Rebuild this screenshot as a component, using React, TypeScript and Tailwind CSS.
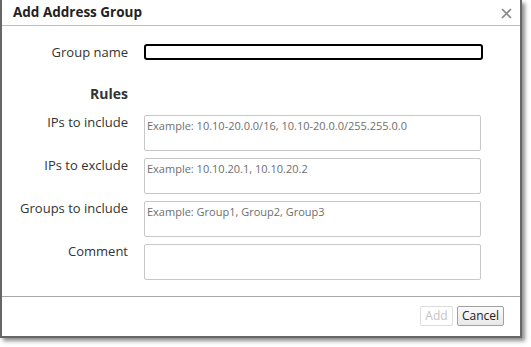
import React from "react";

const font = { fontFamily: '"Open Sans", "Noto Sans", sans-serif' };

function Row({ label, placeholder }: { label: string; placeholder?: string }) {
  return (
    <div className="flex items-start mb-[7px]">
      <div className="w-[126px] text-right text-[13px] leading-[16px] text-[#333] -mt-[1px]">{label}</div>
      <div className="ml-[16px] w-[337px] h-[36px] border border-[#c8c8c8] rounded-[2px] bg-white px-[2px] pt-[3px] text-[11px] leading-[14px] text-[#6e6e6e]">
        {placeholder}
      </div>
    </div>
  );
}

export default function App() {
  return (
    <div className="w-[531px] h-[347px] bg-white relative" style={font}>
      <div className="w-[522px] h-[338px] bg-white border-x-2 border-b-2 border-[#666] shadow-[3px_3px_4px_rgba(0,0,0,0.45)] flex flex-col">
        <div className="h-[26px] border-b border-[#bdbdbd] flex items-center justify-between pl-[11px] pr-[8px]">
          <span className="text-[13.5px] font-bold text-[#222] leading-none">Add Address Group</span>
          <svg width="11" height="11" viewBox="0 0 11 11" className="mt-[1px]">
            <path d="M1 1 L10 10 M10 1 L1 10" stroke="#8a8a8a" strokeWidth="1.7" fill="none" />
          </svg>
        </div>
        <div className="flex-1 flex flex-col">
          <div className="flex items-center mt-[18px]">
            <div className="w-[126px] text-right text-[13px] leading-[16px] text-[#333] -mt-[1px]">Group name</div>
            <div className="ml-[16px] w-[339px] h-[16px] border-2 border-black rounded-[3px]" />
          </div>
          <div className="mt-[26px] w-[126px] text-right text-[14px] font-bold text-[#333] leading-[16px]">Rules</div>
          <div className="mt-[13px]">
            <Row label="IPs to include" placeholder="Example: 10.10-20.0.0/16, 10.10-20.0.0/255.255.0.0" />
            <Row label="IPs to exclude" placeholder="Example: 10.10.20.1, 10.10.20.2" />
            <Row label="Groups to include" placeholder="Example: Group1, Group2, Group3" />
            <Row label="Comment" />
          </div>
        </div>
        <div className="h-[40px] border-t border-[#a8a8a8] flex items-start justify-end pt-[9px] pr-[16px] gap-[4px]">
          <div className="w-[33px] h-[20px] border border-[#dcdcdc] rounded-[2px] text-[12px] leading-[18px] text-center text-[#c4c4c4] bg-white">Add</div>
          <div className="w-[47px] h-[20px] border border-[#a0a0a0] rounded-[2px] text-[12px] leading-[18px] text-center text-[#222] bg-gradient-to-b from-[#fafafa] to-[#e8e8e8]">Cancel</div>
        </div>
      </div>
    </div>
  );
}
